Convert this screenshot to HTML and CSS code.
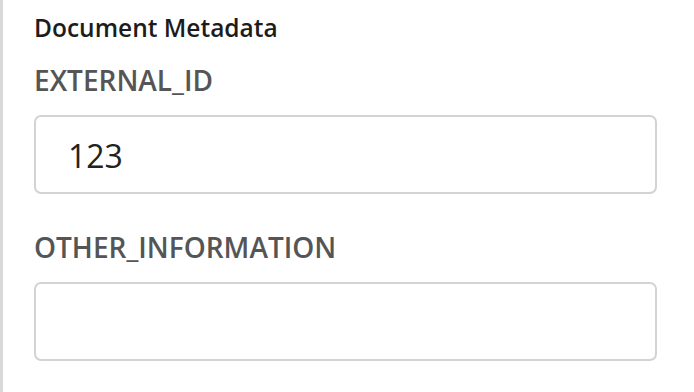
FILE: index.html
```html
<!DOCTYPE html>
<html>
<head>
<meta charset="utf-8">
<link rel="stylesheet" href="styles.css">
</head>
<body>
<div class="panel">
  <div class="title">Document Metadata</div>
  <div class="field">
    <label class="label">EXTERNAL_ID</label>
    <div class="input">123</div>
  </div>
  <div class="field">
    <label class="label">OTHER_INFORMATION</label>
    <div class="input"></div>
  </div>
</div>
</body>
</html>
```
FILE: styles.css
```css
html, body {
  margin: 0;
  padding: 0;
  background: #ffffff;
  height: 100%;
}
.panel {
  box-sizing: border-box;
  height: 392px;
  border-left: 3px solid #d9d9d9;
  padding: 12px 37px 0 31px;
  font-family: "Open Sans", sans-serif;
}
.title {
  font-size: 24.5px;
  font-weight: 600;
  line-height: 32px;
  color: #1c1c1c;
}
.field {
  display: flex;
  flex-direction: column;
}
.title + .field {
  margin-top: 17px;
}
.field + .field {
  margin-top: 34px;
}
.label {
  font-size: 28px;
  font-weight: 600;
  line-height: 38px;
  color: #555555;
  margin-bottom: 16px;
}
.input {
  box-sizing: border-box;
  height: 79px;
  border: 2px solid #d3d3d3;
  border-radius: 7px;
  padding: 3px 0 0 32px;
  font-size: 32px;
  line-height: 72px;
  color: #222222;
}
```
